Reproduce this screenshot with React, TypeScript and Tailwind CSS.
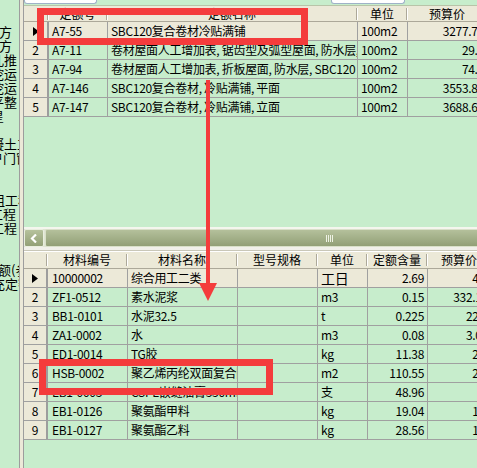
import React from 'react';

const quotaRows = [
  { code: 'A7-55', name: 'SBC120复合卷材冷贴满铺', unit: '100m2', price: '3277.71' },
  { code: 'A7-11', name: '卷材屋面人工增加表, 锯齿型及弧型屋面, 防水层, SBC120', unit: '100m2', price: '29.6' },
  { code: 'A7-94', name: '卷材屋面人工增加表, 折板屋面, 防水层, SBC120', unit: '100m2', price: '74.3' },
  { code: 'A7-146', name: 'SBC120复合卷材, 冷贴满铺, 平面', unit: '100m2', price: '3553.84' },
  { code: 'A7-147', name: 'SBC120复合卷材, 冷贴满铺, 立面', unit: '100m2', price: '3688.65' },
];

const materialRows = [
  { code: '10000002', name: '综合用工二类', unit: '工日', qty: '2.69', price: '4.6' },
  { code: 'ZF1-0512', name: '素水泥浆', unit: 'm3', qty: '0.15', price: '332.18' },
  { code: 'BB1-0101', name: '水泥32.5', unit: 't', qty: '0.225', price: '22.9' },
  { code: 'ZA1-0002', name: '水', unit: 'm3', qty: '0.08', price: '3.05' },
  { code: 'ED1-0014', name: 'TG胶', unit: 'kg', qty: '11.38', price: '2.4' },
  { code: 'HSB-0002', name: '聚乙烯丙纶双面复合防水卷材', unit: 'm2', qty: '110.55', price: '2.5' },
  { code: 'EB1-0003', name: 'CSPE嵌缝油膏330mL', unit: '支', qty: '48.96', price: '8' },
  { code: 'EB1-0126', name: '聚氨酯甲料', unit: 'kg', qty: '19.04', price: '1.8' },
  { code: 'EB1-0127', name: '聚氨酯乙料', unit: 'kg', qty: '28.56', price: '1.9' },
];

// visible tail ends of the tree items (the tree is scrolled sideways)
const treeLines = [
  { text: '土方', cls: '-ml-[14px]' },
  { text: '土方', cls: '-ml-[14px]' },
  { text: '孔推', cls: '-ml-[9px]' },
  { text: '挖运', cls: '-ml-[9px]' },
  { text: '挖运', cls: '-ml-[9px]' },
  { text: '平整', cls: '-ml-[9px]' },
  { text: '星', cls: '-ml-[9px]' },
  { text: '', cls: '' },
  { text: '凝土工', cls: '-ml-[9px]' },
  { text: '户门窗', cls: '-ml-[10px]' },
  { text: '', cls: '' },
  { text: '', cls: '' },
  { text: '组工程', cls: '-ml-[8px]' },
  { text: '工程', cls: '-ml-[10px]' },
  { text: '工程', cls: '-ml-[9px]' },
  { text: '', cls: '' },
  { text: '', cls: '' },
  { text: '额(参', cls: '-ml-[2px]' },
  { text: '充定额', cls: '-ml-[8px]' },
];

function RowMark() {
  return (
    <svg width="6" height="9" viewBox="0 0 6 9">
      <polygon points="0,0 6,4.5 0,9" fill="#000" />
    </svg>
  );
}

function HeaderCell({ className, label }: { className: string; label?: string }) {
  return (
    <div className={`flex h-full shrink-0 items-center ${className}`}>
      <span className="flex-1 text-center">{label}</span>
      <span className="h-[12px] w-[2px] border-l border-[#aca899] bg-white" />
    </div>
  );
}

function QuotaGrid() {
  return (
    <div className="flex flex-1 flex-col overflow-hidden">
      <div className="flex h-[16px] shrink-0 border-b border-[#aca899] bg-[#ece9d8]">
        <HeaderCell className="w-[25px]" />
        <HeaderCell className="w-[59px]" label="定额号" />
        <HeaderCell className="w-[250px]" label="定额名称" />
        <HeaderCell className="w-[50px]" label="单位" />
        <HeaderCell className="w-[80px]" label="预算价" />
      </div>
      {quotaRows.map((r, i) => (
        <div
          key={r.code}
          className={`flex h-[19px] shrink-0 border-b border-[#a0a0a0] tracking-[-0.3px] ${i === 0 ? 'bg-[#ece9d8]' : ''}`}
        >
          <div className="flex w-[25px] shrink-0 items-center justify-center border-r-2 border-[#9d9d9d] bg-[#ece9d8]">
            {i === 0 ? <RowMark /> : i + 1}
          </div>
          <div className="flex w-[59px] shrink-0 items-center overflow-hidden whitespace-nowrap border-r border-[#a0a0a0] pl-[3px]">
            {r.code}
          </div>
          <div className="flex w-[250px] shrink-0 items-center overflow-hidden whitespace-nowrap border-r border-[#a0a0a0] pl-[3px]">
            {r.name}
          </div>
          <div className="flex w-[50px] shrink-0 items-center overflow-hidden whitespace-nowrap border-r border-[#a0a0a0] pl-[3px]">
            {r.unit}
          </div>
          <div className="flex w-[80px] shrink-0 items-center justify-end overflow-hidden whitespace-nowrap border-r border-[#a0a0a0] pr-[3px]">
            {r.price}
          </div>
        </div>
      ))}
      <div className="flex-1 bg-[#c7edcc]" />
      <div className="flex h-[20px] shrink-0 border-t-2 border-[#f4f6ee] bg-[#dfe5d2]">
        <div className="flex w-[20px] shrink-0 items-center justify-center rounded-[2px] border border-[#e9eedf] bg-[linear-gradient(#b6c29d,#a2af87_55%,#93a077)]">
          <svg width="8" height="9" viewBox="0 0 8 9">
            <path d="M6 0.5 L2 4.5 L6 8.5" fill="none" stroke="#fff" strokeWidth="2.2" />
          </svg>
        </div>
        <div className="ml-[1px] flex w-[568px] shrink-0 items-center justify-center rounded-[2px] border border-[#d9e0c9] bg-[linear-gradient(#b4c09b,#a3b089_50%,#929f76)]">
          <div className="flex h-[7px] gap-[1px]">
            <span className="w-[1px] bg-[#eef2e4]" />
            <span className="w-[1px] bg-[#eef2e4]" />
            <span className="w-[1px] bg-[#eef2e4]" />
            <span className="w-[1px] bg-[#eef2e4]" />
          </div>
        </div>
      </div>
    </div>
  );
}

function MaterialGrid() {
  return (
    <div className="flex h-[217px] shrink-0 flex-col overflow-hidden">
      <div className="flex h-[18px] shrink-0 border-b border-[#aca899] border-t border-t-white bg-[#ece9d8]">
        <HeaderCell className="w-[24px]" />
        <HeaderCell className="w-[80px]" label="材料编号" />
        <HeaderCell className="w-[110px]" label="材料名称" />
        <HeaderCell className="w-[80px]" label="型号规格" />
        <HeaderCell className="w-[50px]" label="单位" />
        <HeaderCell className="w-[60px]" label="定额含量" />
        <HeaderCell className="w-[64px]" label="预算价" />
      </div>
      {materialRows.map((r, i) => (
        <div
          key={r.code}
          className={`flex h-[19px] shrink-0 border-b border-[#a0a0a0] tracking-[-0.3px] ${i === 0 ? 'bg-[#ece9d8]' : ''}`}
        >
          <div className="flex w-[24px] shrink-0 items-center justify-center border-r-2 border-[#9d9d9d] bg-[#ece9d8]">
            {i === 0 ? <RowMark /> : i + 1}
          </div>
          <div className="flex w-[80px] shrink-0 items-center overflow-hidden whitespace-nowrap border-r border-[#a0a0a0] pl-[4px]">
            {r.code}
          </div>
          <div className="flex w-[110px] shrink-0 items-center overflow-hidden whitespace-nowrap border-r border-[#a0a0a0] pl-[3px]">
            {r.name}
          </div>
          <div className="w-[80px] shrink-0 border-r border-[#a0a0a0]" />
          <div
            className={`flex w-[50px] shrink-0 items-center overflow-hidden whitespace-nowrap border-r border-[#a0a0a0] pl-[3px] ${i === 0 ? 'text-[14px]' : ''}`}
          >
            {r.unit}
          </div>
          <div className="flex w-[60px] shrink-0 items-center justify-end overflow-hidden whitespace-nowrap border-r border-[#a0a0a0] pr-[3px]">
            {r.qty}
          </div>
          <div className="flex w-[64px] shrink-0 items-center justify-end overflow-hidden whitespace-nowrap border-r border-[#a0a0a0] pr-[3px]">
            {r.price}
          </div>
        </div>
      ))}
      <div className="flex-1 bg-[#c7edcc]" />
    </div>
  );
}

export default function App() {
  return (
    <div className="relative flex h-[468px] w-[477px] overflow-hidden bg-[#c7edcc] font-['Noto_Sans_CJK_SC',sans-serif] text-[12px] text-black">
      <div className="w-[19px] shrink-0 overflow-hidden pt-[25px] text-[13px] leading-[14px]">
        {treeLines.map((l, i) => (
          <div key={i} className={`h-[14px] whitespace-nowrap ${l.cls}`}>
            {l.text}
          </div>
        ))}
      </div>
      <div className="w-[5px] shrink-0 border-x border-[#9d9d9d] bg-[#ece9d8]" />

      <div className="flex min-w-0 flex-1 flex-col overflow-hidden">
        <div className="flex h-[6px] shrink-0 items-start border-b border-[#b8c4a8] bg-[#c7edcc]">
          <div className="h-[4px] w-[73px] rounded-b-[3px] border-x border-b border-[#9fb2c8] bg-white" />
          <div className="ml-[234px] h-[4px] w-[74px] rounded-b-[3px] border-x border-b border-[#9fb2c8] bg-white" />
        </div>
        <QuotaGrid />
        <div className="h-[4px] shrink-0 border-b border-[#c9c7b8] bg-[#f1f0ea]" />
        <MaterialGrid />
      </div>

      {/* red annotations drawn over the screenshot */}
      <div className="pointer-events-none absolute left-[37px] top-[8px] h-[37px] w-[271px] border-[7px] border-[#f43c3c]" />
      <div className="pointer-events-none absolute left-[39px] top-[359px] h-[36px] w-[234px] border-[7px] border-[#f43c3c]" />
      <svg
        className="pointer-events-none absolute left-0 top-0"
        width="477"
        height="468"
        viewBox="0 0 477 468"
      >
        <line x1="208" y1="80" x2="208" y2="286" stroke="#f43c3c" strokeWidth="4" />
        <polygon points="199,283 217,283 208,301" fill="#f43c3c" />
      </svg>
    </div>
  );
}
